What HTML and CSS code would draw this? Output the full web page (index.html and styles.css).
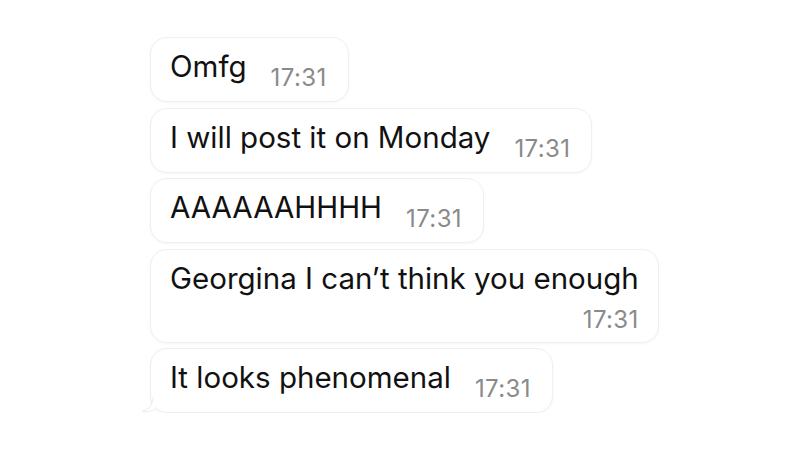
FILE: index.html
```html
<!DOCTYPE html>
<html lang="en">
<head>
    <meta charset="UTF-8">
    <meta name="viewport" content="width=device-width, initial-scale=1.0">
    <title>Chat</title>
    <link rel="stylesheet" href="styles.css">
</head>
<body>
    <div class="chat">
        <div class="bubble">
            <span class="text">Omfg</span>
            <span class="time">17:31</span>
        </div>
        <div class="bubble">
            <span class="text">I will post it on Monday</span>
            <span class="time">17:31</span>
        </div>
        <div class="bubble">
            <span class="text">AAAAAAHHHH</span>
            <span class="time">17:31</span>
        </div>
        <div class="bubble wrap">
            <span class="text">Georgina I can’t think you enough</span>
            <span class="time">17:31</span>
        </div>
        <div class="bubble last">
            <span class="text">It looks phenomenal</span>
            <span class="time">17:31</span>
            <svg class="tail" width="14" height="16" viewBox="0 0 14 16">
                <path d="M12 0 C12 7 9 12 1 14.5 C5 15.5 10 14.5 14 12" fill="#fff" stroke="#ececec" stroke-width="1"/>
            </svg>
        </div>
    </div>
</body>
</html>
```

FILE: styles.css
```css
body {
    margin: 0;
    background: #fff;
    font-family: Inter, "Noto Sans", sans-serif;
}

.chat {
    display: flex;
    flex-direction: column;
    align-items: flex-start;
    gap: 5.5px;
    padding: 37px 0 0 150px;
}

.bubble {
    position: relative;
    display: flex;
    align-items: flex-end;
    gap: 24px;
    padding: 9px 21px 11px 19px;
    background: #fff;
    border: 1px solid #efefef;
    border-radius: 17px;
    box-shadow: 0 1px 3px rgba(0, 0, 0, 0.04);
}

.text {
    font-size: 29.5px;
    line-height: 38px;
    margin-bottom: 5px;
    color: #111;
}

.time {
    font-size: 24px;
    line-height: 24px;
    letter-spacing: 0.4px;
    color: #8a8a8a;
}

.wrap {
    flex-direction: column;
    align-items: flex-end;
    gap: 11px;
    padding: 9px 19px 10px 19px;
}

.wrap .text {
    align-self: flex-start;
    margin-bottom: 0;
}

.tail {
    position: absolute;
    left: -10px;
    bottom: -1px;
}
```
